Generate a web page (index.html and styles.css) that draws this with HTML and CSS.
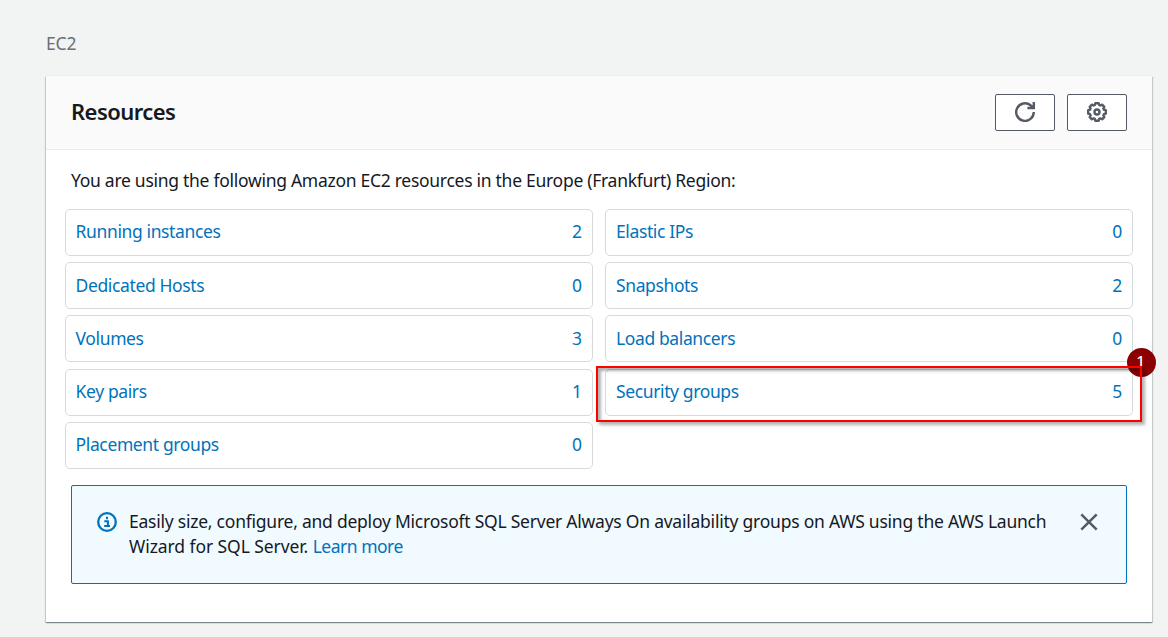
FILE: index.html
```html
<!DOCTYPE html>
<html lang="en">
<head>
<meta charset="utf-8">
<title>EC2 Resources</title>
<link rel="stylesheet" href="styles.css">
</head>
<body>
<nav class="breadcrumb">EC2</nav>
<main class="panel">
  <header class="panel-header">
    <h1 class="title">Resources</h1>
    <div class="actions">
      <button class="btn" aria-label="Refresh"><svg width="20" height="20" viewBox="0 0 20 20" fill="none" stroke="#545b64" stroke-width="2.4"><path d="M18.8 10A8.800 8.800 0 1 1 15.600 3.300L18 5.400"/><path d="M18.800 0v6h-6.400"/><path d="M15 6l3-3v3z" fill="#545b64" stroke="none"/></svg></button>
      <button class="btn" aria-label="Settings"><svg width="20" height="20" viewBox="0 0 20 20" fill="none" stroke="#545b64" stroke-width="2.4" stroke-linejoin="round"><path d="M8.3 1.200h3.400l.5 1.800 1.100.5 1.800-.9 2.200 2.200-.9 1.800.5 1.100 1.900.5v3.500l-1.900.5-.5 1.100.9 1.800-2.200 2.200-1.800-.9-1.100.5-.5 1.900H8.300l-.5-1.900-1.100-.5-1.800.9-2.200-2.200.9-1.800-.5-1.100-1.900-.5V8.200l1.900-.5.5-1.100-.9-1.800 2.200-2.200 1.800.9 1.100-.5z"/><circle cx="10" cy="10" r="2.500"/></svg></button>
    </div>
  </header>
  <p class="intro">You are using the following Amazon EC2 resources in the Europe (Frankfurt) Region:</p>
  <div class="grid">
    <a class="cell"><span>Running instances</span><span>2</span></a>
    <a class="cell"><span>Elastic IPs</span><span>0</span></a>
    <a class="cell"><span>Dedicated Hosts</span><span>0</span></a>
    <a class="cell"><span>Snapshots</span><span>2</span></a>
    <a class="cell"><span>Volumes</span><span>3</span></a>
    <a class="cell"><span>Load balancers</span><span>0</span></a>
    <a class="cell"><span>Key pairs</span><span>1</span></a>
    <a class="cell"><span>Security groups</span><span>5</span></a>
    <a class="cell"><span>Placement groups</span><span>0</span></a>
  </div>
  <section class="notice">
    <svg class="info" width="20" height="20" viewBox="0 0 20 20" fill="none" stroke="#0073bb"><circle cx="10" cy="10" r="8.800" stroke-width="2.300"/><path d="M10 4.700v2.500M7.300 9.300h3.600v4.600M7.200 14.100h5.800" stroke-width="2"/></svg>
    <p class="notice-text">Easily size, configure, and deploy Microsoft SQL Server Always On availability groups on AWS using the AWS Launch<br><span class="line2">Wizard for SQL Server. </span><a class="learn">Learn more</a></p>
    <svg class="close" width="18" height="18" viewBox="0 0 18 18" fill="none" stroke="#545b64" stroke-width="2.500"><path d="M1.300 1.300l15.400 15.400M16.700 1.300L1.300 16.700"/></svg>
  </section>
</main>
<div class="badge">1</div>
<div class="highlight"></div>
</body>
</html>
```
FILE: styles.css
```css
* { box-sizing: border-box; }
body {
  margin: 0;
  height: 637px;
  overflow: hidden;
  padding: 31px 16px 0 46px;
  background: #f2f3f3;
  color: #16191f;
  font: 17.5px/25px "Noto Sans", sans-serif;
}
.breadcrumb { height: 45px; color: #687078; letter-spacing: -0.2px; }
.panel {
  height: 546px;
  background: #fff;
  box-shadow: 0 1px 1px 0 rgba(0,28,36,.3), 1px 1px 1px 0 rgba(0,28,36,.15), -1px 1px 1px 0 rgba(0,28,36,.15), 0 -1px 0 0 #eaeded;
}
.panel-header {
  height: 74px;
  padding: 0 25px;
  display: flex;
  align-items: center;
  justify-content: space-between;
  background: #fafafa;
  border-bottom: 1px solid #eaeded;
}
.title { margin: 0; padding-bottom: 4px; font-size: 22px; line-height: 30px; font-weight: 650; letter-spacing: -0.55px; }
.actions { display: flex; gap: 12px; }
.btn {
  width: 60px;
  height: 37px;
  padding: 0 0 2px;
  display: flex;
  align-items: center;
  justify-content: center;
  background: #fff;
  border: 1px solid #545b64;
  border-radius: 2px;
}
.intro { margin: 0; padding: 18px 25px 16px; white-space: nowrap; letter-spacing: -0.28px; }
.grid {
  display: grid;
  grid-template-columns: 528px 528px;
  grid-auto-rows: 47px;
  gap: 6.2px 12.4px;
  padding-left: 18.6px;
}
.cell {
  display: flex;
  justify-content: space-between;
  padding: 9.35px 10px 0;
  border: 1px solid #d5dbdb;
  border-radius: 5px;
  color: #0073bb;
  letter-spacing: -0.38px;
}
.notice {
  display: flex;
  margin: 16.200px 25px 0;
  height: 99px;
  padding: 24px 28px 0 25px;
  background: #f1faff;
  border: 1px solid #0073bb;
  border-radius: 2px;
}
.info { margin: 2px 12px 0 0; flex: none; }
.notice-text { margin: -1px 0 0; flex: 1; white-space: nowrap; letter-spacing: -0.235px; }
.line2 { letter-spacing: -0.08px; }
.learn { color: #0073bb; letter-spacing: -0.5px; }
.close { margin-top: 3px; flex: none; }
.badge {
  position: absolute;
  left: 1127px;
  top: 348px;
  width: 29px;
  height: 29px;
  padding-right: 2px;
  border-radius: 50%;
  background: #8b0000;
  color: #fff;
  font-size: 15px;
  font-weight: 500;
  line-height: 25px;
  text-align: center;
}
.highlight {
  position: absolute;
  left: 596px;
  top: 366px;
  width: 546px;
  height: 56px;
  border: 2px solid #f00;
  box-shadow: 3px 3px 3px rgba(0,0,0,.3), inset 3px 3px 3px rgba(0,0,0,.3);
}
```
